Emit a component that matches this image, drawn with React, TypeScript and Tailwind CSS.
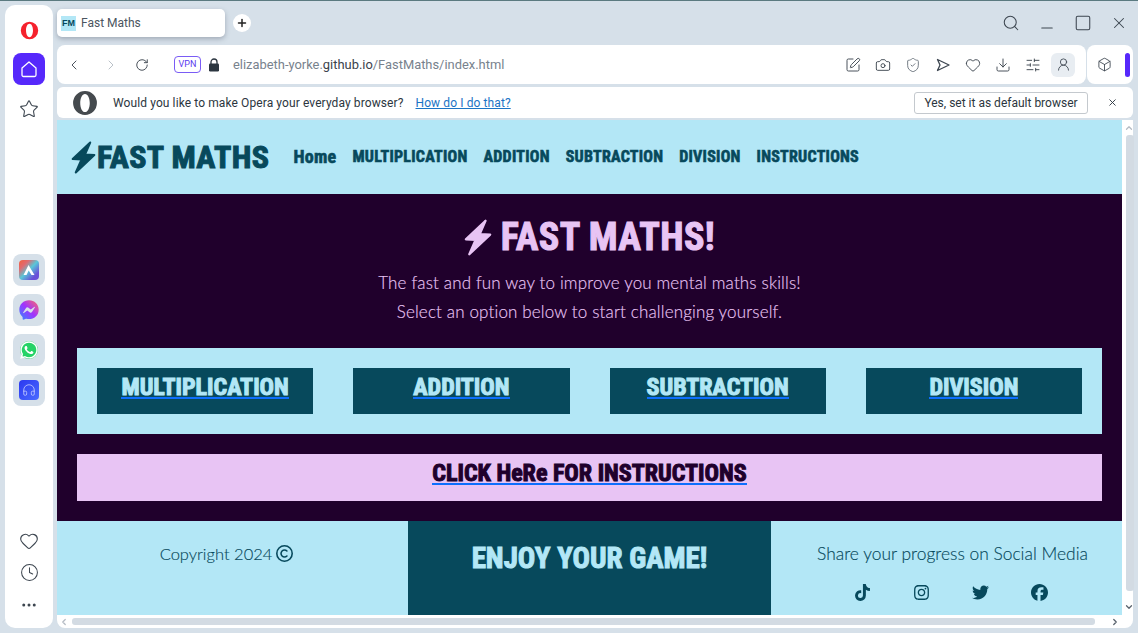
import React from "react";
import { ChevronLeft, ChevronRight, ChevronUp, ChevronDown, RotateCw, Search, Minus, Square, X, Plus, Star, Heart, Clock, Ellipsis, SquarePen, Camera, ShieldCheck, Download, SlidersHorizontal, UserRound, Box, Headphones } from "lucide-react";
import { FaTiktok, FaInstagram, FaTwitter, FaFacebook, FaWhatsapp, FaFacebookMessenger, FaRegCopyright } from "react-icons/fa6";

const display = "[font-family:'Liberation_Sans_Narrow','Roboto_Condensed','Roboto',sans-serif] font-bold [-webkit-text-stroke-width:0.6px]";
const displayBig = "[font-family:'Liberation_Sans_Narrow','Roboto_Condensed','Roboto',sans-serif] font-bold [-webkit-text-stroke-width:1px]";
const body = "[font-family:'Lato',sans-serif] font-light [-webkit-text-stroke-width:0.15px]";
const ui = "[font-family:'Roboto',sans-serif]";

function Bolt({ w, h, className }: { w: number; h: number; className?: string }) {
  return (
    <svg width={w} height={h} viewBox="0 0 24 32" className={className}>
      <path fill="currentColor" stroke="currentColor" strokeWidth="2" strokeLinejoin="round" d="M18.500 1.500 L1.500 17.500 L10 18 L4.500 30.500 L22.500 13.500 L13.500 13 Z" />
    </svg>
  );
}

function OperaLogo({ size, color }: { size: number; color: string }) {
  return (
    <svg width={size} height={size} viewBox="0 0 24 24">
      <path fillRule="evenodd" fill={color} d="M12 1a11 11 0 1 0 0 22 11 11 0 0 0 0-22Zm0 2.600c2.600 0 4.400 3.700 4.400 8.400s-1.800 8.400-4.400 8.400-4.400-3.700-4.400-8.400 1.800-8.400 4.400-8.400Z" />
    </svg>
  );
}

function AppBtn({ children }: { children: React.ReactNode }) {
  return <div className="relative w-[32px] h-[32px] rounded-[8px] bg-[#d6e0e9] flex items-center justify-center">{children}</div>;
}

function Sidebar() {
  return (
    <aside className="w-[48px] rounded-[10px] bg-white flex flex-col items-center text-[#3d4650] shrink-0">
      <div className="mt-[13px] h-[24px] flex items-center justify-center"><OperaLogo size={19} color="#f5222d" /></div>
      <div className="mt-[11px] w-[32px] h-[32px] rounded-[8px] bg-[#5628fb] flex items-center justify-center text-white">
        <svg width="18" height="18" viewBox="0 0 18 18" fill="none" stroke="currentColor" strokeWidth="1.300" strokeLinejoin="round"><path d="M9 2 L16 8 V15 A1.500 1.500 0 0 1 14.500 16.500 H3.500 A1.500 1.500 0 0 1 2 15 V8 Z" /></svg>
      </div>
      <div className="mt-[14px]"><Star size={20} strokeWidth={1.3} /></div>
      <div className="mt-[135px] flex flex-col gap-[8px]">
        <AppBtn>
          <div className="w-[20px] h-[20px] rounded-[4px] bg-[linear-gradient(135deg,#f2603c,#e06a70_25%,#58c7d8_50%,#6a50d8_80%)] flex items-center justify-center">
            <svg width="14" height="14" viewBox="0 0 14 14"><path d="M1.500 12 L6.500 2 L12.500 12 L9.500 12 L6.700 7.500 L4.500 12Z" fill="#fff" /></svg>
          </div>
        </AppBtn>
        <AppBtn>
          <svg width="0" height="0" className="absolute"><defs><linearGradient id="msg" x1="0" y1="1" x2="1" y2="0"><stop offset="0" stopColor="#2f8cff" /><stop offset="0.5" stopColor="#a033ff" /><stop offset="1" stopColor="#ff6a68" /></linearGradient></defs></svg>
          <FaFacebookMessenger size={20} style={{ fill: "url(#msg)" }} />
        </AppBtn>
        <AppBtn>
          <div className="w-[18px] h-[18px] rounded-full bg-[#25d366]" />
          <FaWhatsapp size={20} color="#fff" className="absolute" />
        </AppBtn>
        <AppBtn>
          <div className="w-[20px] h-[20px] rounded-[4px] bg-[linear-gradient(135deg,#2b38f0,#4a6cff)] flex items-center justify-center text-[#cfd6ff]"><Headphones size={14} strokeWidth={1.3} /></div>
        </AppBtn>
      </div>
      <div className="mt-auto mb-[14px] flex flex-col items-center gap-[12px]">
        <Heart size={20} strokeWidth={1.3} />
        <Clock size={19} strokeWidth={1.3} />
        <Ellipsis size={18} strokeWidth={2} className="mt-[2px]" />
      </div>
    </aside>
  );
}

function TitleRow() {
  return (
    <div className="h-[40px] flex items-start text-[#3d4650]">
      <div className="mt-[4px] w-[168px] h-[28px] rounded-[5px] bg-white shadow-[0_2px_5px_rgba(60,70,90,0.35)] flex items-center pl-[4px] gap-[5px]">
        <div className="w-[15px] h-[15px] bg-[#b3e7f6] text-[#07495c] text-[9px] leading-[15px] text-center font-bold [font-family:'Liberation_Sans',sans-serif]">FM</div>
        <span className={`text-[12px] text-[#4b5560] ${ui}`}>Fast Maths</span>
      </div>
      <div className="ml-[8px] mt-[9px] w-[18px] h-[18px] rounded-full bg-white flex items-center justify-center text-[#222]"><Plus size={12} strokeWidth={3} /></div>
      <div className="ml-auto mr-[5px] flex items-center gap-[18px] mt-[9px]">
        <Search size={18} strokeWidth={1.4} />
        <Minus size={18} strokeWidth={1.4} className="translate-y-[5px]" />
        <Square size={18} strokeWidth={1.4} />
        <X size={18} strokeWidth={1.4} />
      </div>
    </div>
  );
}

function SendHollow() {
  return (
    <svg width="16" height="16" viewBox="0 0 16 16" fill="none" stroke="currentColor" strokeWidth="1.300" strokeLinejoin="round"><path d="M2.500 2.500 L14 8 L2.500 13.500 L5 8 Z" /></svg>
  );
}

function Toolbar() {
  const common = { size: 16, strokeWidth: 1.4 };
  return (
    <div className="flex gap-[1px] h-[39px]">
      <div className="flex-1 bg-white rounded-[8px] flex items-center text-[#3d4650]">
        <ChevronLeft size={16} strokeWidth={1.4} className="ml-[9px]" />
        <ChevronRight size={16} strokeWidth={1.4} className="ml-[21px] text-[#b5bcc4]" />
        <RotateCw size={14} strokeWidth={1.6} className="ml-[16px]" />
        <div className={`ml-[25px] w-[27px] h-[17px] rounded-[4px] border border-[#7a5cf5] text-[#5a3cf0] text-[9px] leading-[15px] text-center ${ui}`}>VPN</div>
        <svg width="12" height="14" viewBox="0 0 12 14" className="ml-[7px] text-[#2c3640]"><path fill="none" stroke="currentColor" strokeWidth="1.300" d="M3 6V4a3 3 0 0 1 6 0v2" /><rect x="1" y="5.500" width="10" height="8" rx="1.200" fill="currentColor" /></svg>
        <span className={`ml-[13px] text-[12.900px] text-[#78828d] ${ui}`}>elizabeth-yorke.<span className="text-[#3a424b]">github.io</span>/FastMaths/index.html</span>
        <div className="ml-auto flex items-center gap-[14px] mr-[11px]">
          <SquarePen {...common} />
          <Camera {...common} />
          <ShieldCheck {...common} className="text-[#6a737d]" />
          <SendHollow />
          <Heart {...common} />
          <Download {...common} />
          <SlidersHorizontal {...common} />
          <div className="ml-[-4px] w-[24px] h-[24px] rounded-[6px] bg-[#e8edf2] flex items-center justify-center"><UserRound size={15} strokeWidth={1.4} /></div>
        </div>
      </div>
      <div className="w-[46px] bg-white rounded-[8px] flex items-center text-[#3d4650]">
        <Box size={15} strokeWidth={1.4} className="ml-[10px]" />
        <div className="ml-[13px] w-[5px] h-[24px] rounded-[3px] bg-[#5628fb]" />
      </div>
    </div>
  );
}

function InfoBar() {
  return (
    <div className={`mt-[3px] h-[31px] bg-white rounded-[6px] flex items-center text-[12px] text-[#2c3640] ${ui}`}>
      <div className="ml-[15px]"><OperaLogo size={26} color="#454a4e" /></div>
      <span className="ml-[15px] tracking-[0.1px]">Would you like to make Opera your everyday browser?</span>
      <span className="ml-[12px] text-[#1b74c5] underline tracking-[0.1px]">How do I do that?</span>
      <div className="ml-auto w-[174px] h-[22px] border border-[#c4c9ce] rounded-[3px] text-center leading-[20px]">Yes, set it as default browser</div>
      <X size={11} strokeWidth={2} className="ml-[19px] mr-[15px]" />
    </div>
  );
}

function CardLink({ children, dark }: { children: React.ReactNode; dark?: boolean }) {
  return (
    <a className={`${dark ? "text-[#20002c]" : "text-[#b3e7f6]"} text-[24px] leading-[28px] h-[26px] border-b-[2px] border-[#0d6efd] ${displayBig}`}>{children}</a>
  );
}

function Hero() {
  return (
    <section className="bg-[#20002c] px-[20px] py-[20px] flex flex-col text-[#e8c4f4] h-[327px]">
      <h1 className={`h-[44px] mt-[1px] flex items-center justify-center gap-[9px] text-[38px] leading-none tracking-[0.4px] ${displayBig}`}>
        <Bolt w={28} h={37} />
        <span>FAST MATHS!</span>
      </h1>
      <p className={`mt-[9px] text-center text-[17px] leading-[29px] tracking-[0.15px] ${body}`}>The fast and fun way to improve you mental maths skills!</p>
      <p className={`text-center text-[17px] leading-[29px] tracking-[0.15px] ${body}`}>Select an option below to start challenging yourself.</p>
      <div className="mt-[22px] h-[86px] bg-[#b3e7f6] p-[20px] grid grid-cols-4 gap-[40px]">
        {["MULTIPLICATION", "ADDITION", "SUBTRACTION", "DIVISION"].map((t) => (
          <div key={t} className="bg-[#07495c] flex justify-center pt-[5px]">
            <CardLink>{t}</CardLink>
          </div>
        ))}
      </div>
      <div className="mt-[20px] h-[47px] bg-[#e8c4f4] flex justify-center pt-[5px]">
        <CardLink dark>CLICK HeRe FOR INSTRUCTIONS</CardLink>
      </div>
    </section>
  );
}

function Footer() {
  return (
    <footer className="h-[94px] flex bg-[#b3e7f6] text-[#07495c]">
      <div className={`w-[351px] pt-[22px] pr-[12px] flex justify-center items-start gap-[4px] text-[16.500px] leading-[22px] ${body}`}>
        <span>Copyright 2024</span>
        <FaRegCopyright size={17} className="mt-[2px]" />
      </div>
      <div className={`w-[363px] bg-[#07495c] text-[#b3e7f6] text-center pt-[20px] text-[29px] leading-[34px] ${displayBig}`}>ENJOY YOUR GAME!</div>
      <div className="flex-1 flex flex-col items-center pt-[22px] pl-[12px]">
        <div className={`text-[17.400px] leading-[22px] ${body}`}>Share your progress on Social Media</div>
        <div className="mt-[19px] ml-[-3px] flex gap-[42px]">
          <FaTiktok size={17} /><FaInstagram size={17} /><FaTwitter size={17} /><FaFacebook size={17} />
        </div>
      </div>
    </footer>
  );
}

function Page() {
  return (
    <div className="mt-[2px] h-[508px] bg-white rounded-b-[8px] grid grid-cols-[1065px_11px] grid-rows-[495px_13px]">
      <div className="flex flex-col">
        <header className="h-[74px] bg-[#b3e7f6] flex items-center text-[#07495c] pl-[14px]">
          <Bolt w={25} h={33} />
          <span className={`ml-[1px] text-[32px] leading-none tracking-[0.4px] ${displayBig}`}>FAST MATHS</span>
          <nav className={`ml-[24px] flex gap-[16px] text-[16px] leading-none tracking-[0.25px] ${display}`}>
            <span className="text-[18px] leading-[16px]">Home</span><span>MULTIPLICATION</span><span>ADDITION</span><span>SUBTRACTION</span><span>DIVISION</span><span>INSTRUCTIONS</span>
          </nav>
        </header>
        <Hero />
        <Footer />
      </div>
      <div className="flex flex-col items-center text-[#5a636d]">
        <ChevronUp size={10} strokeWidth={3} className="mt-[3px] ml-[3px] text-[#b5bcc4]" />
        <div className="mt-[2px] ml-[5px] w-[8px] h-[456px] rounded-[3px] bg-[#d3dbe3]" />
        <ChevronDown size={10} strokeWidth={3} className="mt-[11px] ml-[3px]" />
      </div>
      <div className="flex items-center text-[#b5bcc4]">
        <ChevronLeft size={10} strokeWidth={3} className="ml-[2px]" />
        <div className="ml-[3px] w-[1023px] h-[7px] rounded-[3px] bg-[#d3dbe3]" />
        <ChevronRight size={10} strokeWidth={3} className="ml-[15px] text-[#5a636d]" />
      </div>
      <div />
    </div>
  );
}

export default function App() {
  return (
    <div className="w-[1138px] h-[633px] overflow-hidden bg-[#d6e0e9] border-t border-[#5b7a80] flex pl-[5px] pr-[5px] pt-[4px] pb-[5px] gap-[4px]">
      <Sidebar />
      <main className="flex-1 flex flex-col min-w-0">
        <TitleRow />
        <Toolbar />
        <InfoBar />
        <Page />
      </main>
    </div>
  );
}
